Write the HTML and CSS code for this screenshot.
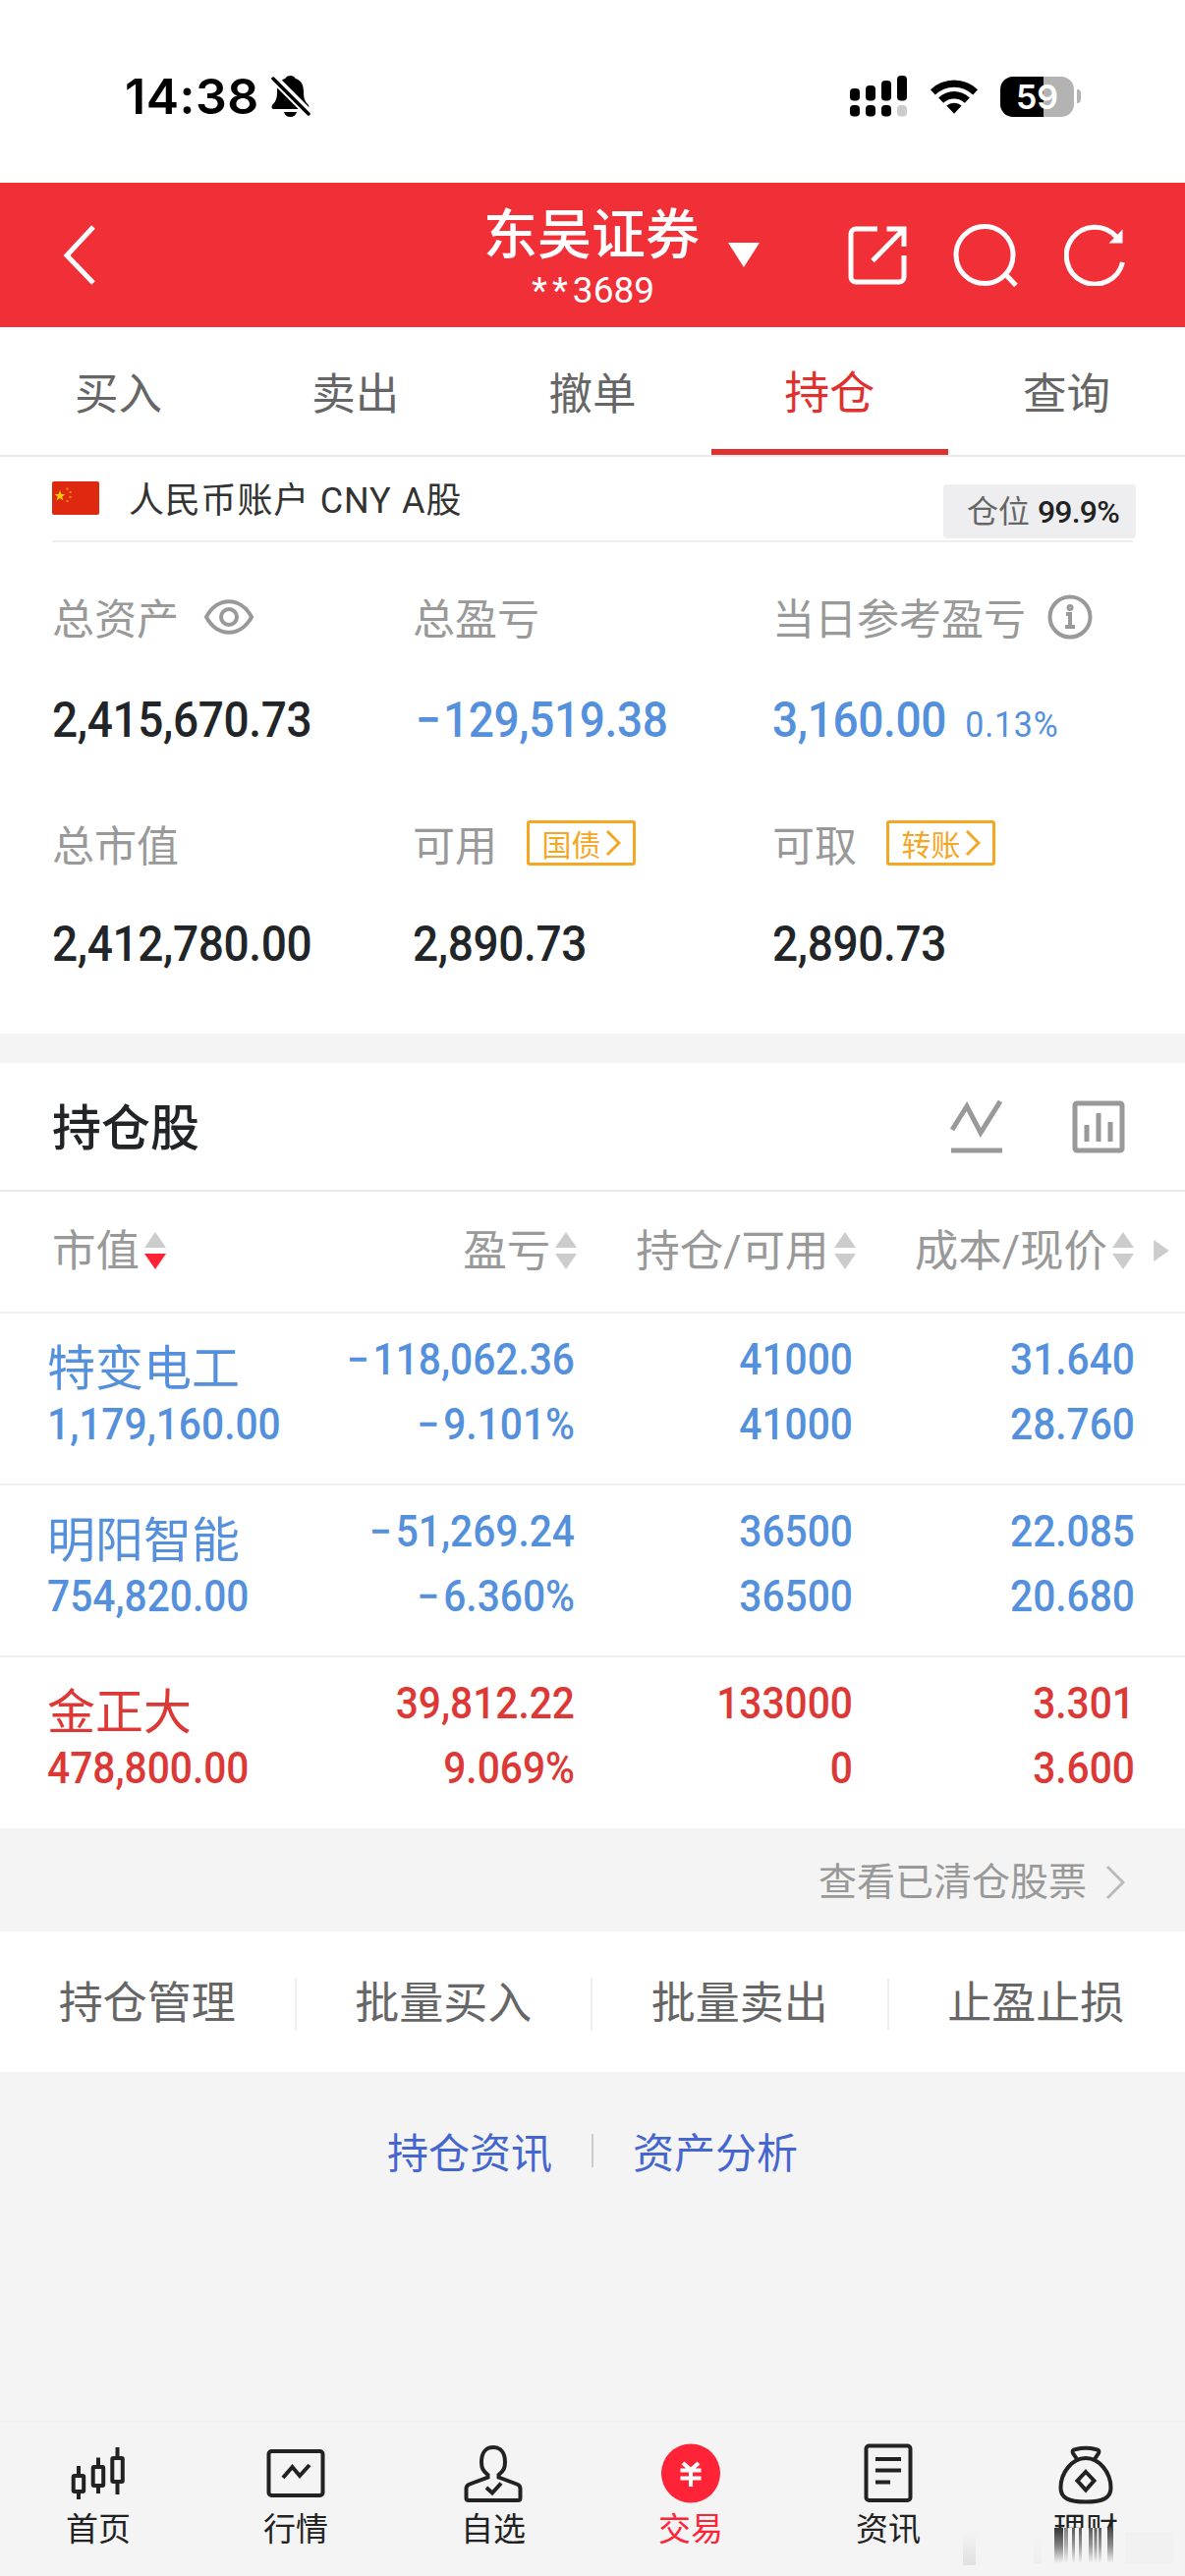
FILE: index.html
```
<!DOCTYPE html>
<html lang="zh-CN">
<head>
<meta charset="utf-8">
<title>持仓</title>
<link rel="stylesheet" href="styles.css">
</head>
<body>
<div class="status">
  <span class="clock">14:38</span>
  <svg class="bell" width="40" height="44" viewBox="0 0 40 44"><path d="M19.500 1c2.500 0 4 1 5 2.800C31 6 33 11 33 18c0 7 2 10 5 13 1 2 0 4-2 4H3c-2.500 0-3-2-2-4 3-3 5-6 5-13 0-7 2-12 8.500-14.200C15.500 2 17 1 19.500 1zM13 38h13c-1 3.500-3 5-6.500 5S14 41.500 13 38z"/><path d="M0 1l40 40" stroke="#fff" stroke-width="9"/><path d="M2 4l36 36" stroke="#000" stroke-width="3.500" stroke-linecap="round"/></svg>
  <svg class="signal" width="58" height="42" viewBox="0 0 58 42"><g fill="#000"><rect x="0" y="13" width="10" height="12.500" rx="4"/><rect x="16" y="10" width="10" height="15.500" rx="4"/><rect x="32" y="5" width="10" height="20.500" rx="4"/><rect x="48" y="0" width="10" height="25.500" rx="4"/><rect x="0" y="30" width="10" height="11.500" rx="4"/><rect x="16" y="30" width="10" height="11.500" rx="4"/><rect x="32" y="30" width="10" height="11.500" rx="4"/></g><rect x="48" y="30" width="10" height="11.500" rx="4" fill="#ccc"/></svg>
  <svg class="wifi" width="50" height="38" viewBox="0 0 52 38"><path d="M1 12a36 36 0 0 1 50 0l-5 5.500a28.500 28.500 0 0 0-40 0z"/><path d="M9.500 20.500a24 24 0 0 1 33 0l-5.200 5.600a16.500 16.500 0 0 0-22.600 0z"/><path d="M18 29a12 12 0 0 1 16 0l-8 8.500z"/></svg>
  <span class="battery">59</span><i class="battery-tip"></i>
</div>
<header class="header">
  <svg class="back" width="34" height="62" viewBox="0 0 34 62"><path d="M31 2L4 31l27 28"/></svg>
  <div class="account"><b>东吴证券</b><span><i>**</i>3689</span></div>
  <svg class="caret" width="34" height="27" viewBox="0 0 34 27"><path d="M1 1h32L17 26z"/></svg>
  <div class="tools">
    <svg width="60" height="60" viewBox="0 0 60 60"><path d="M30 3H8a5 5 0 0 0-5 5v44a5 5 0 0 0 5 5h44a5 5 0 0 0 5-5V30M39.500 3H57v18M56 4L25 35.500"/></svg>
    <svg width="66" height="64" viewBox="0 0 66 64"><circle cx="32" cy="31.500" r="29"/><path d="M53 51l11 11.500"/></svg>
    <svg width="62" height="63" viewBox="0 0 62 63"><path d="M59.500 39A29 29 0 1 1 53 13"/><path d="M58.500 8v10.500H48z" fill="#fff" stroke-width="2"/></svg>
  </div>
</header>
<nav class="tabs"><span>买入</span><span>卖出</span><span>撤单</span><span class="on">持仓</span><span>查询</span></nav>
<section class="currency">
  <svg class="flag" width="48" height="34" viewBox="0 0 48 34"><rect width="48" height="34" rx="2" fill="#de2910"/><path d="M8 9l1.400 4h4.100l-3.300 2.500 1.300 4L8 17l-3.500 2.500 1.300-4L2.500 13h4.100z" fill="#ffcf00"/><g fill="#f6a21a" opacity=".7"><circle cx="15.500" cy="7.500" r="1.300"/><circle cx="18.500" cy="11" r="1.300"/><circle cx="18.500" cy="16" r="1.300"/><circle cx="15.500" cy="20" r="1.300"/></g></svg>
  <span class="name">人民币账户 CNY A股</span>
  <span class="ratio">仓位 <b>99.9%</b></span>
</section>
<section class="summary">
  <div class="cell"><div class="label">总资产<svg class="eye" width="52" height="40" viewBox="0 0 52 40"><path d="M3 20C14-1 38-1 49 20 38 41 14 41 3 20z"/><circle cx="26" cy="20" r="8"/></svg></div><div class="num">2,415,670.73</div></div>
  <div class="cell"><div class="label">总盈亏</div><div class="num blue"><i class="minus">−</i>129,519.38</div></div>
  <div class="cell"><div class="label">当日参考盈亏<svg class="info" width="46" height="46" viewBox="0 0 46 46"><circle cx="23" cy="23" r="20.500"/><path d="M19 20h4v12M18 33h10"/><circle cx="23" cy="13.500" r="1.500"/></svg></div><div class="num blue">3,160.00<small>0.13%</small></div></div>
  <div class="cell"><div class="label">总市值</div><div class="num">2,412,780.00</div></div>
  <div class="cell"><div class="label">可用<span class="chip">国债<svg width="16" height="28" viewBox="0 0 16 28"><path d="M2 2l12 12L2 26"/></svg></span></div><div class="num">2,890.73</div></div>
  <div class="cell"><div class="label">可取<span class="chip">转账<svg width="16" height="28" viewBox="0 0 16 28"><path d="M2 2l12 12L2 26"/></svg></span></div><div class="num">2,890.73</div></div>
</section>
<section class="holdings">
  <div class="title"><h2>持仓股</h2>
    <svg width="54" height="54" viewBox="0 0 54 54"><path d="M2 30L17 6l14 27L51 1M1 51h52"/></svg>
    <svg width="54" height="54" viewBox="0 0 54 54"><rect x="3" y="3" width="48" height="48" rx="2"/><path d="M15 25v17M27 13v29M39 22v20"/></svg>
  </div>
  <div class="row head">
    <span>市值<svg class="sort down" width="22" height="38" viewBox="0 0 22 38"><path d="M11 0l11 16H0z"/><path d="M11 38l11-16H0z"/></svg></span>
    <span>盈亏<svg class="sort" width="22" height="38" viewBox="0 0 22 38"><path d="M11 0l11 16H0z"/><path d="M11 38l11-16H0z"/></svg></span>
    <span>持仓/可用<svg class="sort" width="22" height="38" viewBox="0 0 22 38"><path d="M11 0l11 16H0z"/><path d="M11 38l11-16H0z"/></svg></span>
    <span>成本/现价<svg class="sort" width="22" height="38" viewBox="0 0 22 38"><path d="M11 0l11 16H0z"/><path d="M11 38l11-16H0z"/></svg></span>
    <svg class="more" width="16" height="22" viewBox="0 0 17 24"><path d="M0 0l17 12L0 24z"/></svg>
  </div>
  <div class="row blue"><div><em>特变电工</em><p>1,179,160.00</p></div><div><p><i class="minus">−</i>118,062.36</p><p><i class="minus">−</i>9.101%</p></div><div><p>41000</p><p>41000</p></div><div><p>31.640</p><p>28.760</p></div></div>
  <div class="row blue"><div><em>明阳智能</em><p>754,820.00</p></div><div><p><i class="minus">−</i>51,269.24</p><p><i class="minus">−</i>6.360%</p></div><div><p>36500</p><p>36500</p></div><div><p>22.085</p><p>20.680</p></div></div>
  <div class="row red"><div><em>金正大</em><p>478,800.00</p></div><div><p>39,812.22</p><p>9.069%</p></div><div><p>133000</p><p>0</p></div><div><p>3.301</p><p>3.600</p></div></div>
</section>
<div class="cleared">查看已清仓股票<svg width="20" height="36" viewBox="0 0 20 36"><path d="M2 2l16 16L2 34"/></svg></div>
<div class="actions"><span>持仓管理</span><span>批量买入</span><span>批量卖出</span><span>止盈止损</span></div>
<div class="links"><span>持仓资讯</span><i></i><span>资产分析</span></div>
<footer class="tabbar">
  <div><svg width="64" height="64" viewBox="0 0 64 64"><rect x="6.700" y="34" width="10.500" height="16" rx="1"/><path d="M12 24v10M12 50v8"/><rect x="26.700" y="25" width="10.500" height="19" rx="1"/><path d="M32 15.500V25M32 44v8"/><rect x="46.300" y="16" width="10.500" height="24" rx="1"/><path d="M51.500 5v11M51.500 40v13"/></svg>首页</div>
  <div><svg width="64" height="64" viewBox="0 0 64 64"><rect x="4.500" y="9" width="55" height="45" rx="3"/><path d="M19 36l9.500-11 7.500 9 10-11"/></svg>行情</div>
  <div><svg width="64" height="64" viewBox="0 0 64 64"><path d="M26.500 33c-5-4-6.500-7-6.500-13C20 10 25 5 32 5s12 5 12 15c0 6-1.500 9-6.500 13v2.500l18.500 7c2.500 1 3.500 2.500 3.500 4.500v9.500c0 2-1 2.500-2.500 2.500H7c-1.500 0-2.500-.5-2.500-2.500V47c0-2 1-3.500 3.500-4.500l18.500-7z"/><path d="M25 46l6 5.500 9-10"/></svg>自选</div>
  <div class="on"><svg width="64" height="64" viewBox="0 0 64 64"><circle cx="32" cy="31.500" r="30" class="disc"/><path d="M24 21l8 7 8-7M32 28v17M21.500 28.500h21M21.500 36.500h21" class="yen"/></svg>交易</div>
  <div><svg width="64" height="64" viewBox="0 0 64 64"><rect x="9.500" y="3.500" width="45" height="55.500" rx="3"/><path d="M19 17h26M19 28.500h26M19 40.500h15"/></svg>资讯</div>
  <div><svg width="64" height="64" viewBox="0 0 64 64"><path d="M23 17l-4-6c-1-2.500 0-3.500 3-4 6-1.500 14-1.500 20 0 3 .5 4 1.500 3 4l-4 6M32 16c-14 0-25.500 15-25.500 30C6.500 57 15 60.500 32 60.500S57.500 57 57.500 46C57.500 31 46 16 32 16z"/><path d="M32 30l8.500 9-8.500 9.500-8.500-9.500z"/></svg>理财
    <svg class="smear" width="240" height="42" viewBox="0 0 240 42">
      <defs><linearGradient id="fade" x1="0" y1="0" x2="0" y2="1"><stop offset="0" stop-color="#333"/><stop offset=".5" stop-color="#333" stop-opacity=".6"/><stop offset="1" stop-color="#333" stop-opacity="0"/></linearGradient>
      <linearGradient id="haze" x1="0" y1="0" x2="0" y2="1"><stop offset="0" stop-color="#ccc" stop-opacity="0"/><stop offset="1" stop-color="#ccc" stop-opacity=".5"/></linearGradient></defs>
      <rect width="240" height="42" fill="#f4f4f4"/>
      <g fill="url(#fade)"><rect x="113" width="9" height="36"/><rect x="123" width="4" height="36" opacity=".6"/><rect x="131" width="3" height="36" opacity=".8"/><rect x="138" width="3" height="36" opacity=".8"/><rect x="148" width="4" height="36" opacity=".8"/><rect x="153.500" width="3" height="36" opacity=".8"/><rect x="158" width="3" height="36" opacity=".8"/><rect x="167" width="6" height="36" opacity=".9"/></g>
      <rect x="20" y="4" width="13" height="34" fill="url(#haze)"/><rect x="92" y="10" width="8" height="26" fill="url(#haze)" opacity=".3"/><rect x="185" y="4" width="50" height="32" fill="#eee" opacity=".5"/>
    </svg></div>
</footer>
</body>
</html>
```
FILE: styles.css
```
* { box-sizing: border-box; }
body { margin: 0; width: 1206px; height: 2622px; overflow: hidden; background: #f4f4f4; display: flex; flex-direction: column; font-family: Roboto, "Noto Sans CJK SC", sans-serif; color: #222528; }
body > * { flex: none; }
svg { display: block; flex: none; fill: none; }
p, h2 { margin: 0; }
em, i { font-style: normal; }

.status { height: 186px; padding: 10px 106px 0 127px; background: #fff; display: flex; align-items: center; }
.clock { font: 600 50px/60px Inter, sans-serif; color: #000; width: 138px; letter-spacing: .5px; white-space: nowrap; }
.bell { fill: #000; margin-left: 11px; }
.signal { margin-left: auto; }
.wifi { fill: #000; margin-left: 23px; }
.battery { margin-left: 22px; width: 75px; height: 41px; border-radius: 13px; background: linear-gradient(90deg, #000 59%, #b3b3b3 59%); color: #fff; font: 600 34px/41px Inter, sans-serif; text-align: center; }
.battery-tip { width: 4px; height: 14px; margin: 0 0 0 3px; border-radius: 0 4px 4px 0; background: #b3b3b3; }

.header { height: 147px; background: #f12f37; display: flex; align-items: center; color: #fff; padding: 0 61px 0 64px; }
.back, .tools svg { stroke: #fff; stroke-width: 5; }
.account { width: 220px; margin-left: 394px; padding-top: 5px; display: flex; flex-direction: column; align-items: center; white-space: nowrap; }
.account b { font-weight: 500; font-size: 55px; line-height: 68px; }
.account span { font-size: 37px; line-height: 46px; padding-left: 3px; letter-spacing: 0; }
.account i { letter-spacing: 5px; }
.caret { fill: #fff; margin-left: 28px; }
.tools { margin-left: auto; display: flex; align-items: center; gap: 47px; }

.tabs { height: 132px; background: #fff; border-bottom: 2px solid #eaeaea; display: grid; grid-template-columns: repeat(5, 1fr); font-size: 44.500px; color: #666; text-align: center; line-height: 124px; }
.tabs span { height: 130px; padding-top: 7px; }
.tabs .on { color: #e03131; font-size: 46px; line-height: 120px; border-bottom: 6px solid #e03131; }

.currency { height: 87px; padding: 0 50px 0 53px; background: linear-gradient(#eee, #eee) 53px 85px / 1100px 2px no-repeat #fff; display: flex; align-items: flex-start; }
.flag { margin-top: 25px; }
.name { margin-left: 30px; margin-top: 20px; font-size: 36px; line-height: 50px; color: #333; letter-spacing: .8px; word-spacing: 1px; }
.ratio { margin-left: auto; margin-top: 28px; width: 196px; height: 55px; padding-right: 17px; border-radius: 4px; background: #eeeef0; font-size: 32px; line-height: 56px; text-align: right; color: #666; }
.ratio b { font-weight: 500; color: #222; letter-spacing: -.8px; }

.summary { height: 500px; background: #fff; padding: 41px 0 0 53px; display: grid; grid-template-columns: 367px 366px 1fr; grid-template-rows: 231px 1fr; }
.label { display: flex; align-items: center; height: 68px; font-size: 43px; color: #999; }
.eye, .info { stroke: #999; stroke-width: 4; margin-top: 2px; }
.eye { margin-left: 25px; }
.info { margin-left: 22px; }
.chip { margin-left: 30px; width: 111px; height: 46px; border: 3px solid #f5a623; border-radius: 3px; color: #f5a623; font-size: 30px; display: flex; align-items: center; justify-content: center; gap: 4px; }
.chip svg { stroke: #f5a623; stroke-width: 3; }
.num { font-size: 50px; font-weight: 500; line-height: 60px; margin-top: 42px; letter-spacing: -.4px; white-space: nowrap; transform: scaleX(.92); transform-origin: left; }
.cell:nth-child(n+4) .num { margin-top: 39px; }
.num small { font-size: 37px; font-weight: 400; margin-left: 21px; letter-spacing: .8px; }
.num .minus { margin: 0 3px; }
.row .minus { margin-right: 4px; }
.blue { color: #5490dc; }
.red { color: #dc3835; }

.holdings { background: #fff; margin-top: 30px; height: 779px; }
.title { height: 131px; border-bottom: 2px solid #eaeaea; padding: 0 61px 0 53px; display: flex; align-items: center; gap: 70px; }
.title h2 { font-size: 50px; line-height: 70px; font-weight: 500; margin: 4px auto 0 0; }
.title svg { stroke: #999; stroke-width: 5; }
.row { height: 175px; display: grid; grid-template-columns: 264px 273px 283px 287px; padding: 14px 0 0 48px; border-bottom: 2px solid #f0f0f0; text-align: right; }
.row > :first-child { text-align: left; }
.row p { font-size: 44px; line-height: 66px; font-weight: 500; white-space: nowrap; transform: scaleX(.925); transform-origin: right; }
.row > :first-child p { transform-origin: left; }
.row em { display: block; font-size: 49px; line-height: 66px; padding-top: 10px; margin-bottom: -10px; }
.row.red { border: 0; }
.row.head { height: 124px; padding: 0 0 0 53px; display: flex; align-items: center; font-size: 44.500px; color: #999; }
.head span { display: flex; align-items: center; gap: 5px; line-height: 60px; }
.sort { fill: #ccc; margin-top: -2px; }
.sort.down path:last-child { fill: #ff2337; }
.head span:nth-child(2) { margin-left: auto; }
.head span:nth-child(3), .head span:nth-child(4) { margin-left: 60px; }
.more { fill: #ccc; margin: -3px 16px 0 20px; }

.cleared { height: 105px; padding: 4px 61px 0 0; display: flex; align-items: center; justify-content: flex-end; gap: 19px; color: #999; font-size: 39px; line-height: 60px; }
.cleared svg { stroke: #bbb; stroke-width: 3; }
.actions { height: 143px; background: #fff; padding-top: 4px; display: grid; grid-template-columns: repeat(4, 1fr); align-items: center; text-align: center; font-size: 45px; color: #666; }
.actions span { line-height: 54px; border-right: 2px solid #f0f0f0; }
.actions span:last-child { border-color: transparent; }
.links { height: 159px; display: flex; align-items: center; justify-content: center; gap: 40px; font-size: 42px; color: #4566d0; }
.links i { width: 2px; height: 34px; background: #ccc; }

.tabbar { margin-top: auto; height: 158px; border-top: 1px solid #f1f1f1; display: grid; grid-template-columns: repeat(6, 1fr); font-size: 33px; line-height: 48px; color: #222; }
.tabbar div { position: relative; display: flex; flex-direction: column; align-items: center; padding-top: 21px; padding-right: 1px; gap: 1px; }
.tabbar svg { stroke: #222; stroke-width: 4; }
.tabbar .on { color: #ff2337; }
.tabbar .disc { fill: #ff2337; stroke: none; }
.tabbar .yen { stroke: #fff; }
.tabbar .smear { position: absolute; right: 6px; top: 108px; stroke: none; }
```
